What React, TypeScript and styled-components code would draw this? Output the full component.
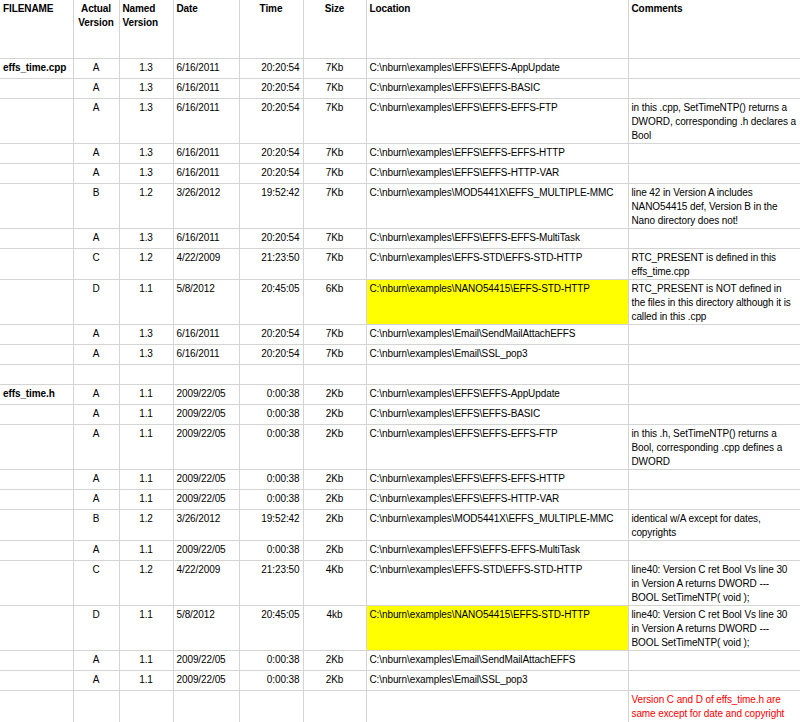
import React from "react";
import styled, { createGlobalStyle } from "styled-components";

const Global = createGlobalStyle`
  body { margin: 0; background: #fff; }
`;

const Table = styled.table`
  border-collapse: collapse;
  table-layout: fixed;
  width: 800px;
  font-family: "Liberation Sans", Arial, sans-serif;
  font-size: 10px;
  letter-spacing: -0.1px;
  color: #000;
`;

const Row = styled.tr<{ $h: number }>`
  height: ${(p) => p.$h}px;
`;

const Cell = styled.td<{ $align?: string; $bold?: boolean; $yellow?: boolean; $red?: boolean; $nowrap?: boolean }>`
  border: 1px solid #d4d4d4;
  border-top: none;
  vertical-align: top;
  padding: 2px 3px 0 3px;
  line-height: 14px;
  text-align: ${(p) => p.$align || "left"};
  font-weight: ${(p) => (p.$bold ? 700 : 400)};
  background: ${(p) => (p.$yellow ? "#ffff00" : "transparent")};
  color: ${(p) => (p.$red ? "#ff0000" : "#000")};
  white-space: ${(p) => (p.$nowrap ? "nowrap" : "normal")};
  overflow: hidden;
  &:first-child { border-left: none; }
`;

const Head = styled(Cell).attrs({ as: "th" })`
  font-weight: 700;
`;

type R = [string, string, string, string, string, string, string, string, number, boolean?];

const top: R[] = [
  ["effs_time.cpp", "A", "1.3", "6/16/2011", "20:20:54", "7Kb", "C:\\nburn\\examples\\EFFS\\EFFS-AppUpdate", "", 20],
  ["", "A", "1.3", "6/16/2011", "20:20:54", "7Kb", "C:\\nburn\\examples\\EFFS\\EFFS-BASIC", "", 20],
  ["", "A", "1.3", "6/16/2011", "20:20:54", "7Kb", "C:\\nburn\\examples\\EFFS\\EFFS-EFFS-FTP", "in this .cpp, SetTimeNTP() returns a DWORD, corresponding .h declares a Bool", 45],
  ["", "A", "1.3", "6/16/2011", "20:20:54", "7Kb", "C:\\nburn\\examples\\EFFS\\EFFS-EFFS-HTTP", "", 20],
  ["", "A", "1.3", "6/16/2011", "20:20:54", "7Kb", "C:\\nburn\\examples\\EFFS\\EFFS-HTTP-VAR", "", 20],
  ["", "B", "1.2", "3/26/2012", "19:52:42", "7Kb", "C:\\nburn\\examples\\MOD5441X\\EFFS_MULTIPLE-MMC", "line 42 in Version A includes NANO54415 def, Version B in the Nano directory  does not!", 45],
  ["", "A", "1.3", "6/16/2011", "20:20:54", "7Kb", "C:\\nburn\\examples\\EFFS\\EFFS-EFFS-MultiTask", "", 20],
  ["", "C", "1.2", "4/22/2009", "21:23:50", "7Kb", "C:\\nburn\\examples\\EFFS-STD\\EFFS-STD-HTTP", "RTC_PRESENT is defined in this effs_time.cpp", 30],
  ["", "D", "1.1", "5/8/2012", "20:45:05", "6Kb", "C:\\nburn\\examples\\NANO54415\\EFFS-STD-HTTP", "RTC_PRESENT is NOT defined in the files in this directory although it is called in this .cpp", 45, true],
  ["", "A", "1.3", "6/16/2011", "20:20:54", "7Kb", "C:\\nburn\\examples\\Email\\SendMailAttachEFFS", "", 20],
  ["", "A", "1.3", "6/16/2011", "20:20:54", "7Kb", "C:\\nburn\\examples\\Email\\SSL_pop3", "", 20],
  ["", "", "", "", "", "", "", "", 20],
  ["effs_time.h", "A", "1.1", "2009/22/05", "0:00:38", "2Kb", "C:\\nburn\\examples\\EFFS\\EFFS-AppUpdate", "", 20],
  ["", "A", "1.1", "2009/22/05", "0:00:38", "2Kb", "C:\\nburn\\examples\\EFFS\\EFFS-BASIC", "", 20],
  ["", "A", "1.1", "2009/22/05", "0:00:38", "2Kb", "C:\\nburn\\examples\\EFFS\\EFFS-EFFS-FTP", "in this .h, SetTimeNTP() returns a Bool, corresponding .cpp defines a DWORD", 45],
  ["", "A", "1.1", "2009/22/05", "0:00:38", "2Kb", "C:\\nburn\\examples\\EFFS\\EFFS-EFFS-HTTP", "", 20],
  ["", "A", "1.1", "2009/22/05", "0:00:38", "2Kb", "C:\\nburn\\examples\\EFFS\\EFFS-HTTP-VAR", "", 20],
  ["", "B", "1.2", "3/26/2012", "19:52:42", "2Kb", "C:\\nburn\\examples\\MOD5441X\\EFFS_MULTIPLE-MMC", "identical w/A except for dates, copyrights", 30],
  ["", "A", "1.1", "2009/22/05", "0:00:38", "2Kb", "C:\\nburn\\examples\\EFFS\\EFFS-EFFS-MultiTask", "", 20],
  ["", "C", "1.2", "4/22/2009", "21:23:50", "4Kb", "C:\\nburn\\examples\\EFFS-STD\\EFFS-STD-HTTP", "line40: Version C ret Bool Vs line 30 in Version A returns DWORD  --- BOOL SetTimeNTP( void );", 45],
  ["", "D", "1.1", "5/8/2012", "20:45:05", "4kb", "C:\\nburn\\examples\\NANO54415\\EFFS-STD-HTTP", "line40: Version C ret Bool Vs line 30 in Version A returns DWORD  --- BOOL SetTimeNTP( void );", 45, true],
  ["", "A", "1.1", "2009/22/05", "0:00:38", "2Kb", "C:\\nburn\\examples\\Email\\SendMailAttachEFFS", "", 20],
  ["", "A", "1.1", "2009/22/05", "0:00:38", "2Kb", "C:\\nburn\\examples\\Email\\SSL_pop3", "", 20],
];

export default function App() {
  return (
    <>
      <Global />
      <Table>
        <colgroup>
          <col style={{ width: 73 }} />
          <col style={{ width: 46 }} />
          <col style={{ width: 54 }} />
          <col style={{ width: 66 }} />
          <col style={{ width: 64 }} />
          <col style={{ width: 63 }} />
          <col style={{ width: 262 }} />
          <col style={{ width: 172 }} />
        </colgroup>
        <thead>
          <Row $h={58}>
            <Head>FILENAME</Head>
            <Head $align="center">Actual Version</Head>
            <Head>Named Version</Head>
            <Head>Date</Head>
            <Head $align="center">Time</Head>
            <Head $align="center">Size</Head>
            <Head>Location</Head>
            <Head>Comments</Head>
          </Row>
        </thead>
        <tbody>
          {top.map((r, i) => (
            <Row key={i} $h={r[8]}>
              <Cell $bold $nowrap>{r[0]}</Cell>
              <Cell $align="center">{r[1]}</Cell>
              <Cell $align="center">{r[2]}</Cell>
              <Cell>{r[3]}</Cell>
              <Cell $align="right">{r[4]}</Cell>
              <Cell $align="center">{r[5]}</Cell>
              <Cell $yellow={!!r[9]} $nowrap>{r[6]}</Cell>
              <Cell>{r[7]}</Cell>
            </Row>
          ))}
          <Row $h={32}>
            <Cell />
            <Cell />
            <Cell />
            <Cell />
            <Cell />
            <Cell />
            <Cell />
            <Cell $red>Version C and D of effs_time.h are same except for date and copyright</Cell>
          </Row>
        </tbody>
      </Table>
    </>
  );
}
